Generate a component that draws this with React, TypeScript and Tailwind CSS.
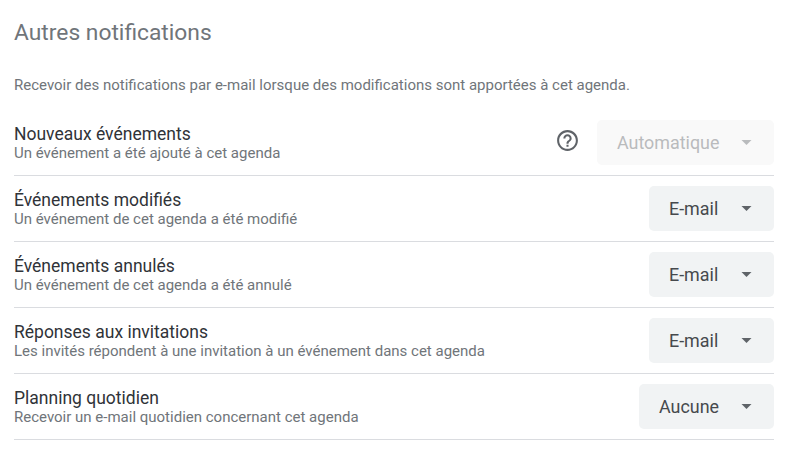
const rows = [
  { title: 'Nouveaux événements', text: 'Un événement a été ajouté à cet agenda', value: 'Automatique', width: 'w-[177px]', disabled: true },
  { title: 'Événements modifiés', text: 'Un événement de cet agenda a été modifié', value: 'E-mail', width: 'w-[125px]' },
  { title: 'Événements annulés', text: 'Un événement de cet agenda a été annulé', value: 'E-mail', width: 'w-[125px]' },
  { title: 'Réponses aux invitations', text: 'Les invités répondent à une invitation à un événement dans cet agenda', value: 'E-mail', width: 'w-[125px]' },
  { title: 'Planning quotidien', text: 'Recevoir un e-mail quotidien concernant cet agenda', value: 'Aucune', width: 'w-[135px]' },
];

function HelpIcon() {
  return (
    <svg viewBox="0 0 24 24" className="mr-[17px] mb-1 size-[25px] fill-[#5f6368]">
      <path d="M11 18h2v-2h-2v2zm1-16C6.48 2 2 6.48 2 12s4.48 10 10 10 10-4.480 10-10S17.520 2 12 2zm0 18c-4.410 0-8-3.590-8-8s3.590-8 8-8 8 3.590 8 8-3.590 8-8 8zm0-14c-2.210 0-4 1.790-4 4h2c0-1.100.9-2 2-2s2 .9 2 2c0 2-3 1.750-3 5h2c0-2.250 3-2.500 3-5 0-2.210-1.790-4-4-4z" />
    </svg>
  );
}

export default function App() {
  return (
    <main className="h-[475px] bg-white pt-[18px] pr-[26px] pl-[14px] font-['Roboto',sans-serif] text-[#70757a]">
      <h1 className="pt-px text-[22.8px] leading-7 font-normal">Autres notifications</h1>
      <p className="mt-[28px] text-[15px] leading-5">
        Recevoir des notifications par e-mail lorsque des modifications sont apportées à cet agenda.
      </p>
      <div className="mt-[15px]">
        {rows.map((row) => (
          <section key={row.title} className="flex h-[66px] items-center border-b border-[#dadce0]">
            <div className="flex-1">
              <h2 className="text-[17.5px] leading-5 font-normal text-[#303338]">{row.title}</h2>
              <p className="text-[15px] leading-[18px]">{row.text}</p>
            </div>
            {row.disabled && <HelpIcon />}
            <button
              disabled={row.disabled}
              className={`flex h-[45px] items-center justify-between rounded-[5px] pr-[22px] pl-5 text-[17.9px] ${row.width} ${row.disabled ? 'bg-[#f9f9f9] text-[#b9bbbd]' : 'bg-[#f1f3f4] text-[#46494d]'}`}
            >
              <span className="leading-[27px]">{row.value}</span>
              <svg
                viewBox="0 0 10 5"
                className={`h-[5px] w-[11px] ${row.disabled ? 'fill-[#b9bbbd]' : 'fill-[#5f6368]'}`}
              >
                <path d="M0 0h10L5 5z" />
              </svg>
            </button>
          </section>
        ))}
      </div>
    </main>
  );
}
